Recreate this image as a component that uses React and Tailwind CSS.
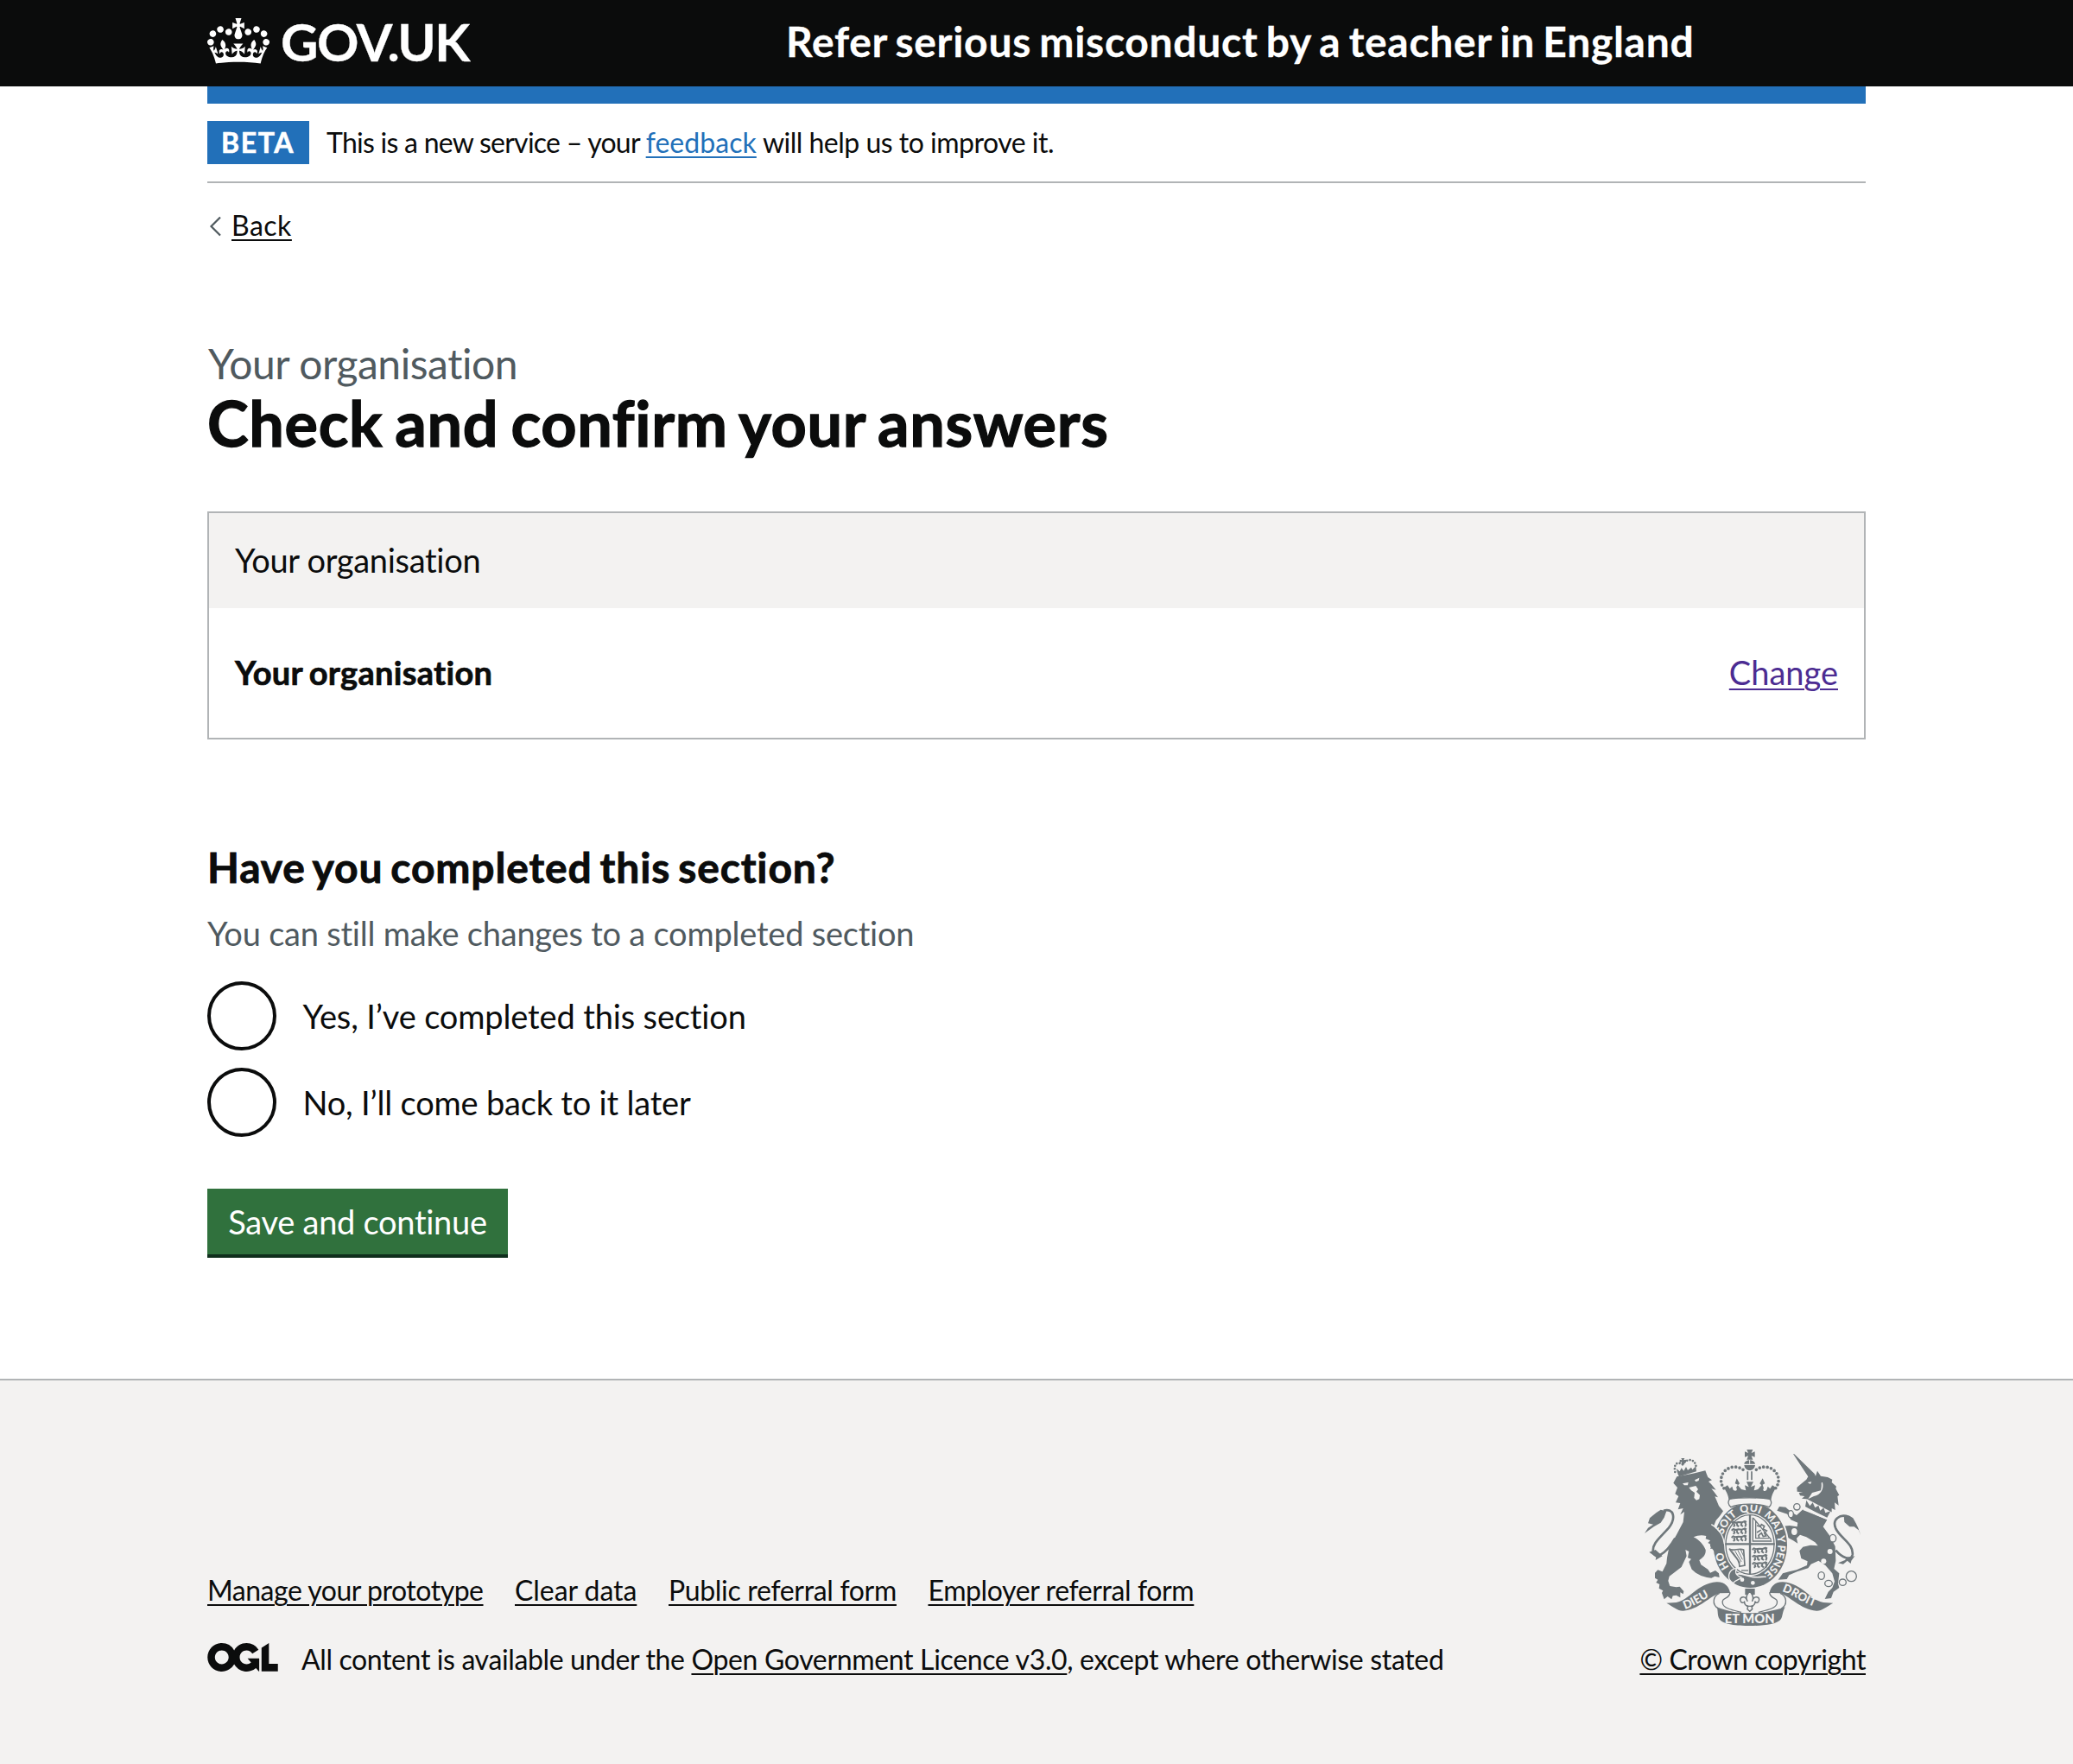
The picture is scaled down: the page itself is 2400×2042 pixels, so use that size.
const LINK = "underline decoration-[2px] underline-offset-[4px]";
const HEAVY = "font-bold [-webkit-text-stroke:0.018em]";

function CrownIcon() {
  return (
    <svg className="mt-[21px] h-[53px] w-[72px] shrink-0" viewBox="0 0 132 97" fill="currentColor" fillRule="evenodd">
      <path d="M25 30.2c3.5 1.5 7.7-.2 9.1-3.7 1.5-3.6-.2-7.8-3.9-9.2-3.6-1.4-7.6.3-9.1 3.9-1.4 3.5.3 7.5 3.9 9zM9 39.5c3.6 1.5 7.8-.2 9.2-3.7 1.5-3.6-.2-7.8-3.9-9.1-3.6-1.5-7.6.2-9.1 3.8-1.4 3.5.3 7.5 3.8 9zM4.4 57.2c3.5 1.5 7.7-.2 9.1-3.8 1.5-3.6-.2-7.7-3.9-9.1-3.5-1.5-7.6.3-9.1 3.8-1.4 3.5.3 7.6 3.9 9.1zm38.3-21.4c3.5 1.5 7.7-.2 9.1-3.8 1.5-3.6-.2-7.7-3.9-9.1-3.6-1.5-7.6.3-9.1 3.8-1.3 3.6.4 7.7 3.9 9.1zm64.4-5.6c-3.6 1.5-7.8-.2-9.1-3.7-1.5-3.6.2-7.8 3.8-9.2 3.6-1.4 7.7.3 9.2 3.9 1.3 3.5-.4 7.5-3.9 9zm15.9 9.3c-3.6 1.5-7.7-.2-9.1-3.7-1.5-3.6.2-7.8 3.7-9.1 3.6-1.5 7.7.2 9.2 3.8 1.5 3.5-.3 7.5-3.8 9zm4.7 17.7c-3.6 1.5-7.8-.2-9.2-3.8-1.5-3.6.2-7.7 3.9-9.1 3.6-1.5 7.7.3 9.2 3.8 1.3 3.5-.4 7.6-3.9 9.1zM89.3 35.8c-3.6 1.5-7.8-.2-9.2-3.8-1.4-3.6.2-7.7 3.9-9.1 3.6-1.5 7.7.3 9.2 3.8 1.4 3.6-.3 7.7-3.9 9.1zM69.7 17.7l8.9 4.7V9.3l-8.9 2.8c-.2-.3-.5-.6-.9-.9L72.4 0H59.6l3.5 11.2c-.3.3-.6.5-.9.9l-8.8-2.8v13.1l8.8-4.7c.3.3.6.7.9.9l-5 15.4v.1c-.2.8-.4 1.6-.4 2.4 0 4.1 3.1 7.5 7 8.1h.2c.3 0 .7.1 1 .1.4 0 .7 0 1-.1h.2c4-.6 7.1-4.1 7.1-8.1 0-.8-.1-1.7-.4-2.4V34l-5.1-15.4c.4-.2.7-.6 1-.9zM66 92.8c16.9 0 32.8 1.1 47.1 3.2 4-16.9 8.9-26.7 14-33.5l-9.6-3.4c1 4.9 1.1 7.2 0 10.2-1.5-1.4-3-4.3-4.2-8.7L108.6 76c2.8-2 5-3.2 7.5-3.3-4.4 9.4-10 11.9-13.6 11.2-4.3-.8-6.3-4.6-5.6-7.9 1-4.7 5.7-5.9 8-.5 4.3-8.7-3-11.4-7.6-8.8 7.1-7.2 7.9-13.5 2.1-21.1-8 6.1-8.1 12.3-4.5 20.8-4.7-5.4-12.1-2.5-9.5 6.2 3.4-5.2 7.9-2 7.2 3.1-.6 4.3-6.4 7.8-13.5 7.2-10.3-.9-10.9-8-11.2-13.8 2.5-.5 7.1 1.8 11 7.3L80.2 60c-4.1 4.4-8 5.3-12.3 5.4 1.4-4.4 8-11.6 8-11.6H55.5s6.4 7.2 7.9 11.6c-4.2-.1-8-1-12.3-5.4l1.4 16.4c3.9-5.5 8.5-7.7 10.9-7.3-.3 5.8-.9 12.8-11.1 13.8-7.2.6-12.9-2.9-13.5-7.2-.7-5 3.8-8.3 7.1-3.1 2.7-8.7-4.6-11.6-9.4-6.2 3.7-8.5 3.6-14.7-4.6-20.8-5.8 7.6-5 13.9 2.2 21.1-4.7-2.6-11.9.1-7.7 8.8 2.3-5.5 7.1-4.2 8.1.5.7 3.3-1.3 7.1-5.7 7.9-3.5.7-9-1.8-13.5-11.2 2.5.1 4.7 1.3 7.5 3.3l-4.7-15.4c-1.2 4.4-2.7 7.2-4.3 8.7-1.1-3-.9-5.3 0-10.2l-9.5 3.4c5 6.9 9.9 16.7 14 33.5 14.8-2.1 30.8-3.2 47.7-3.2z" />
    </svg>
  );
}

function LicenceLogo() {
  return (
    <svg className="mt-[2px] h-[33px] w-[82px] shrink-0" viewBox="0 0 483.2 195.7" fill="currentColor">
      <path d="M421.5 142.8V.1l-50.7 32.3v161.1h112.4v-50.7zm-122.3-9.6A47.12 47.12 0 0 1 221 97.8c0-26 21.1-47.1 47.1-47.1 16.7 0 31.4 8.7 39.7 21.8l42.7-27.2A97.63 97.63 0 0 0 268.1 0c-36.5 0-68.3 20.1-85.1 49.7A98 98 0 0 0 97.8 0C43.9 0 0 43.9 0 97.9s43.9 97.8 97.8 97.8c36.5 0 68.3-20.1 85.1-49.7a97.76 97.76 0 0 0 149.6 25.4l19.4 22.2h3v-87.8h-80l24.3 27.5zM97.8 145c-26 0-47.1-21.1-47.1-47.1s21.1-47.1 47.1-47.1 47.1 21.1 47.1 47.1S123.8 145 97.8 145" />
    </svg>
  );
}

function WalkingLions({ x, y }) {
  return (
    <g transform={`translate(${x} ${y})`} fill="none" stroke="#6f777b" strokeWidth="6" strokeLinejoin="round">
      {[0, 25, 50].map((dy) => (
        <path key={dy} d={`M0 ${8 + dy}l6-5 8 3 10-2 12 1 10-4 6 3M8 ${8 + dy}l3 8-5 4M18 ${6 + dy}l2 10 6 3M36 ${5 + dy}l-3 9 7 5M46 ${4 + dy}l4 8-3 8`} />
      ))}
    </g>
  );
}

function RibbonHalf() {
  return (
    <>
      <path fill="#6f777b" d="M148 587L182 585C228 578 252 520 322 514C352 513 366 532 369 552L332 553C300 562 262 610 206 614C188 615 172 600 148 587Z" />
      <path fill="none" stroke="#6f777b" strokeWidth="4" d="M332 553C310 562 304 592 328 606M369 550C366 576 338 566 343 588C346 606 380 612 408 619" />
    </>
  );
}

function RoyalArms() {
  return (
    <svg className="h-[204px] w-[250px]" viewBox="72 54 750 612" fontFamily="Lato, sans-serif" fontWeight="900">
      <defs>
        <path id="garter" d="M438 500A97 115 0 0 1 438 270A97 115 0 0 1 438 500" />
        <path id="ribbonLeft" d="M212 608C248 598 276 574 330 548" />
        <path id="ribbonRight" d="M549 546C588 556 622 592 690 608" />
      </defs>
      <g fill="#6f777b">
        {/* lion */}
        <path d="M172 170L184 148L240 137L283 127L288 140L292 150L306 160L294 165L304 175L320 194L304 190L314 202L327 220L316 217L322 230L330 250L345 268L333 285L320 300L312 320L330 348L343 372L346 385L338 404L328 400L318 412L312 400L300 398L306 386L292 378L300 370L284 364L286 354C270 350 256 352 242 358C262 368 276 384 284 402C286 420 274 430 262 438L268 454L292 470L300 482L318 474L330 484L332 498L316 494L304 500L288 498L268 492L250 482L236 470L230 455L226 444L234 434L222 430L226 408L214 402L218 424L200 462L158 494L154 510L160 528L182 532L194 530L208 546L206 556L196 550L196 568L182 560L170 562L166 574L152 564L140 574L132 552L136 544L122 536L124 522L112 516L118 506L108 500L108 482L118 472L134 478L148 450L150 430L156 398L184 348L206 306L210 270L196 280L206 258L188 262L196 240L180 238L190 216L178 208L186 186Z" />
        <path d="M72 345L84 326L102 314L84 310L90 292L112 274L128 263L148 268L140 290L128 308L104 322Z" />
        <path fill="none" stroke="#6f777b" strokeWidth="8" d="M138 266C174 256 182 292 156 326C130 356 96 380 102 410C108 434 142 424 178 362" />
        <path d="M88 410L110 402L134 424L110 438L112 428Z" />
        {/* unicorn */}
        <path d="M588 69L592 70L662 138L666 146L672 128L684 146L708 150L724 158L722 168L738 182L736 190L748 212L742 216L746 248L732 238L734 264L722 258L722 276L704 268L680 252L656 240L634 226L618 224L628 216L612 214L608 204L622 202L602 200L601 186L612 176L634 158L640 148Z" />
        <path d="M622 262L640 268L668 282L706 298L692 322L714 352L734 390L736 440L730 468L748 484L744 520L748 534L728 548L720 570L698 573L710 548L724 534L732 512L724 484L700 456L676 440L650 452L640 466L602 478L574 490L566 504L536 506L552 484L574 478L600 472L636 456L638 442L616 432L610 406L622 392L648 386L674 388L664 376L634 358L612 350L600 362L604 380L588 370L570 360L556 340L552 320L576 318L602 322L604 308L580 298L568 278L550 272L532 266L540 252L562 254L580 270L600 282Z" />
        <path d="M822 352L818 336L800 322L784 322L766 306L764 284L784 284L796 292L806 310L814 326Z" />
        <path fill="none" stroke="#6f777b" strokeWidth="8" d="M782 288C750 276 722 296 736 328C752 362 800 382 794 420C788 442 758 430 736 404" />
        <path d="M744 448L768 438L776 428L802 424L790 440L788 450L776 440L762 452Z" />
        {/* garter */}
        <ellipse cx="439" cy="386" rx="134" ry="154" fill="#f3f2f1" />
        <ellipse cx="439" cy="386" rx="128" ry="148" />
      </g>
      <ellipse cx="438" cy="384" rx="90" ry="109" fill="#f3f2f1" />
      <g fill="none" stroke="#6f777b">
        <ellipse cx="438" cy="384" rx="84" ry="103" strokeWidth="4" />
        <path strokeWidth="7" d="M438 280V488M352 382H524" />
        <path strokeWidth="4" d="M448 290V372H514M458 302V362H504M450 292L512 368" />
        <path strokeWidth="5" d="M462 318l12 4 4-8 10 6-4 10 12 6-8 8 6 10-10 2-6-12-10 8 2 10M476 334l-14 8" />
        <path strokeWidth="5" d="M366 398C376 410 400 394 416 402L420 456L402 460C400 430 384 428 366 398" />
        <path strokeWidth="3" d="M376 406L404 448M386 406L408 444M396 404L412 436M406 402L416 424" />
        <path strokeWidth="4" d="M408 474H432" />
      </g>
      <WalkingLions x={374} y={302} />
      <WalkingLions x={446} y={394} />
      <text fill="#f3f2f1" fontSize="37">
        <textPath href="#garter" startOffset="84">
          HO<tspan dx="60">SOIT</tspan><tspan dx="14">QUI</tspan><tspan dx="14">MAL</tspan><tspan dx="5">Y</tspan><tspan dx="6">PENSE</tspan>
        </textPath>
      </text>
      {/* buckle and strap */}
      <path fill="none" stroke="#f3f2f1" strokeWidth="5" d="M370 494C400 476 420 492 446 496C470 500 484 494 494 496" />
      <path fill="#6f777b" stroke="#f3f2f1" strokeWidth="4" d="M392 466C360 470 356 506 380 518C386 506 404 506 408 498C396 494 382 486 392 466Z" />
      <circle cx="411" cy="506" r="7" fill="#f3f2f1" />
      <circle cx="448" cy="517" r="7" fill="#f3f2f1" />
      {/* forepaw resting on the garter */}
      <path fill="#6f777b" d="M302 310L330 340L346 372L344 392L334 404L322 402L316 410L300 390Z" />
      <path fill="none" stroke="#f3f2f1" strokeWidth="4" d="M304 314C328 328 346 352 349 382" />
      {/* faces */}
      <g fill="#f3f2f1">
        <path d="M204 172L224 168L222 178L210 178ZM246 160L262 152L260 162L250 166Z" />
        <path d="M226 186L250 180L258 192L252 200L264 212L262 226L252 230L244 222L246 204L234 196Z" />
        <path d="M654 204L684 196C690 174 682 168 690 168C696 190 684 212 660 216L640 226Z" />
        <path d="M638 168L652 166L648 174Z" />
        <circle cx="716" cy="408" r="9" />
        <circle cx="694" cy="442" r="9" />
      </g>
      {/* unicorn collar and chain */}
      <path fill="#f3f2f1" d="M636 226L724 272L714 300L622 264Z" />
      <path fill="#6f777b" d="M630 252L634 230L646 250L656 238L664 256L676 248L682 266L694 256L700 274L718 268L706 290L664 270Z" />
      <g fill="none" stroke="#6f777b" strokeWidth="4">
        <ellipse cx="601" cy="253" rx="11" ry="11" />
        <ellipse cx="580" cy="278" rx="9" ry="12" fill="#f3f2f1" />
        <ellipse cx="592" cy="339" rx="12" ry="14" fill="#f3f2f1" />
        <ellipse cx="726" cy="362" rx="11" ry="13" fill="#f3f2f1" />
        <ellipse cx="686" cy="492" rx="11" ry="13" />
        <ellipse cx="711" cy="519" rx="13" ry="11" />
        <ellipse cx="760" cy="515" rx="12" ry="11" />
        <circle cx="790" cy="494" r="18" />
      </g>
      {/* lion crown */}
      <g fill="#6f777b">
        <path d="M188 140L182 120L194 130L200 118L208 128L216 114L222 126L234 116L238 124L250 112L252 130L192 148Z" />
        <path d="M199 84h12l-3 7 8-2v10l-8-2 3 9h-12l3-9-8 2v-10l8 2z" />
      </g>
      <path fill="none" stroke="#6f777b" strokeWidth="8" strokeLinecap="round" strokeDasharray="0 10.5" d="M178 132C172 104 186 94 204 106C212 90 246 76 252 118" />
      {/* centre crown */}
      <path fill="#6f777b" d="M427 54H448L443 66L455 61V80L443 76L448 89H427L432 76L420 80V61L432 66Z" />
      <path fill="#6f777b" d="M418 104C420 86 454 86 456 104ZM418 108H456C454 120 446 126 437 126C428 126 420 120 418 108Z" />
      <path stroke="#f3f2f1" strokeWidth="3" d="M437 90V104" />
      <path stroke="#6f777b" strokeWidth="5" d="M430 130V160M444 130V160" />
      <g fill="none" stroke="#6f777b" strokeWidth="11" strokeLinecap="round" strokeDasharray="0 13.5">
        <path d="M414 124C388 104 344 116 338 154C336 172 342 182 352 194" />
        <path d="M460 124C486 104 530 116 537 154C539 172 532 182 523 194" />
      </g>
      <path fill="#6f777b" d="M348 186L360 178L368 190L376 182L380 194C390 202 396 194 390 186L396 176L386 172L392 154L402 172L396 178L408 192L424 196L420 178L434 184L426 166H450L441 184L456 178L452 196L466 192L478 178L472 172L482 154L490 172L482 176L486 188C480 196 488 202 496 194L500 182L508 190L516 178L528 186C518 204 512 216 512 228C470 220 406 220 364 228C364 216 358 204 348 186Z" />
      <path fill="#f3f2f1" stroke="#6f777b" strokeWidth="4" d="M368 226C400 220 474 220 506 226C516 234 512 248 504 254C480 240 396 240 372 254C362 246 360 234 368 226Z" />
      {/* fleur-de-lis pendant */}
      <path fill="#6f777b" d="M421 537H455V558H421Z" />
      <path fill="#f3f2f1" stroke="#6f777b" strokeWidth="4.5" strokeLinejoin="round" d="M437 546C450 560 450 572 446 580C450 562 470 562 470 576C468 588 458 588 456 582C456 590 450 596 444 598L446 608L437 616L429 608L431 598C424 596 418 590 419 582C416 588 406 588 404 576C406 562 424 562 429 580C424 572 424 560 437 546Z" />
      <path stroke="#6f777b" strokeWidth="4" d="M426 598H450" />
      {/* motto ribbon */}
      <RibbonHalf />
      <g transform="translate(875 0) scale(-1 1)"><RibbonHalf /></g>
      <path fill="#6f777b" d="M323 601C368 618 400 622 437 622C475 622 508 618 560 601C550 620 552 632 546 642C534 662 480 666 437 666C395 666 342 662 332 642C324 630 328 616 323 601Z" />
      <g fill="#f3f2f1" fontSize="40">
        <text><textPath href="#ribbonLeft">DIEU</textPath></text>
        <text><textPath href="#ribbonRight">DROIT</textPath></text>
        <text x="350" y="657" fontSize="44" textLength="174">ET MON</text>
      </g>
    </svg>
  );
}

function Header() {
  return (
    <header className="h-[100px] bg-[#0b0c0c] text-white">
      <div className={`mx-auto flex w-[1920px] whitespace-nowrap ${HEAVY}`}>
        <div className="flex w-[670px] shrink-0">
          <CrownIcon />
          <span className="ml-[13px] text-[60px] leading-[96px] tracking-[-1.5px]">GOV.UK</span>
        </div>
        <span className="text-[48px] leading-[96px] tracking-[0.7px] [word-spacing:-3px]">Refer serious misconduct by a teacher in England</span>
      </div>
    </header>
  );
}

function Radio({ label, className }) {
  return (
    <label className="flex h-[80px]">
      <span className="size-[80px] rounded-full border-[4px] border-[#0b0c0c] bg-white" />
      <span className={`ml-[30.5px] leading-[81px] ${className}`}>{label}</span>
    </label>
  );
}

function Footer() {
  return (
    <footer className="mt-[140px] h-[446px] border-t-2 border-[#b1b4b6] bg-[#f3f2f1] text-[32px] leading-[42px]">
      <div className="mx-auto flex w-[1920px] justify-between whitespace-nowrap">
        <div className="mt-[222px]">
          <nav className="flex">
            <a className={`w-[356px] tracking-[-0.48px] ${LINK}`}>Manage your prototype</a>
            <a className={`w-[178px] tracking-[-0.06px] ${LINK}`}>Clear data</a>
            <a className={`w-[300.5px] tracking-[-0.32px] ${LINK}`}>Public referral form</a>
            <a className={`tracking-[-0.39px] ${LINK}`}>Employer referral form</a>
          </nav>
          <div className="mt-[38px] flex">
            <LicenceLogo />
            <p className="ml-[27px] tracking-[-0.34px]">
              <span className="tracking-[-0.37px]">All content is available under the </span>
              <a className={LINK}>Open Government Licence v3.0</a>, except where otherwise stated
            </p>
          </div>
        </div>
        <div className="mt-[80px] flex flex-col items-end">
          <div className="mr-[6px] h-[204px]"><RoyalArms /></div>
          <a className={`mt-[18px] tracking-[-0.4px] ${LINK}`}>© Crown copyright</a>
        </div>
      </div>
    </footer>
  );
}

export default function App() {
  return (
    <div className="min-h-[2042px] bg-white font-['Lato',sans-serif] text-[#0b0c0c] [font-variant-ligatures:none]">
      <Header />
      <div className="mx-auto w-[1920px] whitespace-nowrap">
        <div className="h-[20px] bg-[#2270b9]" />
        <div className="flex h-[92px] items-start border-b-2 border-[#b1b4b6] pt-[20px] text-[32px]">
          <strong className={`h-[50px] w-[118px] bg-[#2270b9] pl-[16px] leading-[50px] tracking-[1.6px] text-white ${HEAVY}`}>BETA</strong>
          <span className="ml-[20px] leading-[50px] tracking-[-0.5px]">
            <span className="tracking-[-0.74px]">This is a new service – your </span>
            <a className={`tracking-[0.05px] text-[#2270b9] ${LINK}`}>feedback</a> will help us to improve it.
          </span>
        </div>
        <a className="mt-[28px] flex h-[40px] text-[32px] leading-[42px]">
          <svg className="mt-[10px] h-[24px] w-[28px]" viewBox="0 0 28 24" fill="none" stroke="#505a5f" strokeWidth="2.2">
            <path d="M15 1.5L4.5 12L15 22.5" />
          </svg>
          <span className={`tracking-[0.5px] ${LINK}`}>Back</span>
        </a>

        <main>
          <h1 className="mt-[112px] font-bold">
            <span className="ml-px block text-[48px] leading-[58px] font-normal tracking-[-0.45px] text-[#505a5f]">Your organisation</span>
            <span className={`-mt-[2px] block text-[72px] leading-[82px] tracking-[0.66px] [word-spacing:-4px] ${HEAVY}`}>Check and confirm your answers</span>
          </h1>

          <section className="mt-[62px] border-2 border-[#b1b4b6] text-[38px]">
            <h2 className="h-[110px] bg-[#f3f2f1] px-[30px] leading-[108px] tracking-[-0.31px]">Your organisation</h2>
            <div className="flex h-[150px] justify-between px-[30px] leading-[148px]">
              <span className={`tracking-[0.3px] [word-spacing:-2px] ${HEAVY}`}>Your organisation</span>
              <a className={`text-[#4c2c92] ${LINK}`}>Change</a>
            </div>
          </section>

          <h2 className={`mt-[117px] text-[48px] leading-[62px] tracking-[0.85px] [word-spacing:-3.5px] ${HEAVY}`}>Have you completed this section?</h2>
          <p className="mt-[19px] text-[38px] leading-[52px] tracking-[-0.22px] text-[#505a5f]">You can still make changes to a completed section</p>
          <div className="mt-[30px] flex flex-col gap-[20px] text-[38px]">
            <Radio label="Yes, I’ve completed this section" className="tracking-[-0.14px]" />
            <Radio label="No, I’ll come back to it later" className="tracking-[-0.19px]" />
          </div>
          <button className="mt-[60px] block h-[80px] w-[348px] border-b-4 border-[#0f2e1c] bg-[#30713d] text-[38px] leading-[76px] tracking-[-0.29px] text-white">
            Save and continue
          </button>
        </main>
      </div>
      <Footer />
    </div>
  );
}
